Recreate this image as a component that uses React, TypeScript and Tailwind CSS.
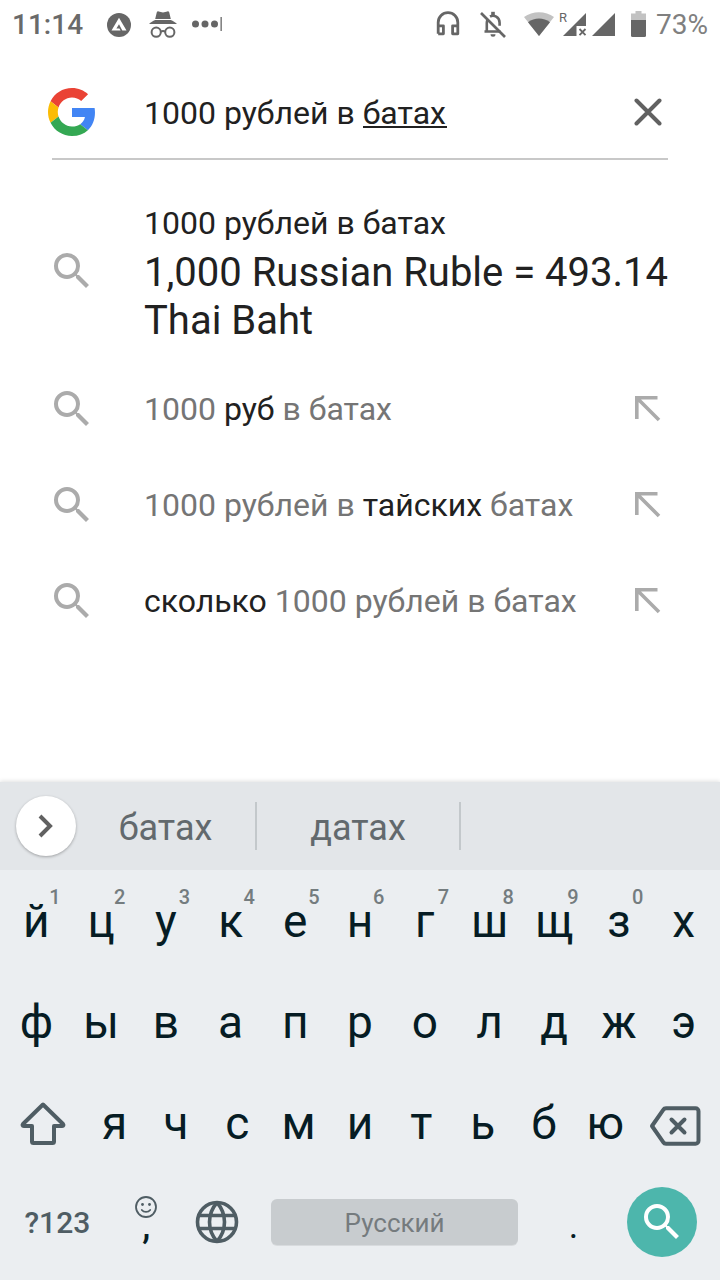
import { useState } from "react";
import type { ReactNode } from "react";

const ROW_ONE = [
  { letter: "й", digit: "1" },
  { letter: "ц", digit: "2" },
  { letter: "у", digit: "3" },
  { letter: "к", digit: "4" },
  { letter: "е", digit: "5" },
  { letter: "н", digit: "6" },
  { letter: "г", digit: "7" },
  { letter: "ш", digit: "8" },
  { letter: "щ", digit: "9" },
  { letter: "з", digit: "0" },
  { letter: "х" },
];
const ROW_TWO = ["ф", "ы", "в", "а", "п", "р", "о", "л", "д", "ж", "э"];
const ROW_THREE = ["я", "ч", "с", "м", "и", "т", "ь", "б", "ю"];

// strong marks the words that the query does not have yet
const SUGGESTIONS = [
  [{ text: "1000 " }, { text: "руб", strong: true }, { text: " в батах" }],
  [{ text: "1000 рублей в " }, { text: "тайских", strong: true }, { text: " батах" }],
  [{ text: "сколько", strong: true }, { text: " 1000 рублей в батах" }],
];

function SearchIcon({ className }: { className: string }) {
  return (
    <svg viewBox="0 0 24 24" fill="currentColor" className={className} aria-hidden="true">
      <path d="M15.5 14h-.79l-.28-.27A6.471 6.471 0 0 0 16 9.5 6.5 6.5 0 1 0 9.5 16c1.61 0 3.09-.59 4.23-1.57l.27.28v.79l5 4.99L20.49 19l-4.99-5zm-6 0C7.01 14 5 11.99 5 9.5S7.01 5 9.5 5 14 7.01 14 9.5 11.99 14 9.5 14z" />
    </svg>
  );
}

function GoogleLogo() {
  return (
    <svg viewBox="0 0 48 48" className="size-12 shrink-0" role="img" aria-label="Google">
      <path fill="#ea4335" d="M24 9.5c3.54 0 6.71 1.22 9.21 3.6l6.85-6.85C35.9 2.38 30.47 0 24 0 14.62 0 6.51 5.38 2.56 13.22l7.98 6.19C12.43 13.72 17.74 9.5 24 9.5z" />
      <path fill="#4285f4" d="M46.98 24.55c0-1.57-.15-3.09-.38-4.55H24v9.02h12.94c-.58 2.96-2.26 5.48-4.78 7.18l7.73 6c4.51-4.18 7.09-10.36 7.09-17.65z" />
      <path fill="#fbbc05" d="M10.53 28.59c-.48-1.45-.76-2.99-.76-4.59s.27-3.14.76-4.59l-7.98-6.19C.92 16.46 0 20.12 0 24c0 3.88.92 7.54 2.56 10.78l7.97-6.19z" />
      <path fill="#34a853" d="M24 48c6.48 0 11.93-2.13 15.89-5.81l-7.73-6c-2.15 1.45-4.92 2.3-8.16 2.3-6.26 0-11.57-4.22-13.47-9.91l-7.98 6.19C6.51 42.62 14.62 48 24 48z" />
    </svg>
  );
}

function StatusBar() {
  return (
    <header className="flex h-12 items-center justify-between px-3 text-[28px] text-[#666]">
      <div className="flex items-center pt-0.5">
        <span className="font-medium text-[#6a6a6a]">11:14</span>
        <svg viewBox="0 0 24 24" className="ml-6 size-6" aria-hidden="true">
          <circle cx="12" cy="12" r="12" fill="#666" />
          <path d="M12 4.800l7.500 12.700h-4.200L12 11.200l-2.600 4.300h3l1.200 2H4.500z" fill="#fff" />
        </svg>
        <svg viewBox="0 0 28 28" className="ml-[18px] size-7" fill="#666" aria-hidden="true">
          <path d="M7.800 1.300c.3-.8 1-1.200 1.800-.9l4.400 1.100 4.400-1.100c.8-.3 1.500.1 1.800.9L21.800 8H6.200z" />
          <path d="M6.200 9h15.600c2.300.9 4.400 2.200 6.200 4H0c1.800-1.800 3.900-3.100 6.200-4z" />
          <g fill="none" stroke="#666" strokeWidth="2">
            <circle cx="7.200" cy="21.200" r="4.600" />
            <circle cx="20.800" cy="21.200" r="4.600" />
            <path d="M11.800 20.600c1.400-.9 3-.9 4.400 0" />
          </g>
        </svg>
        <svg viewBox="0 0 31 16" className="ml-[15px] h-4 w-[31px]" fill="#666" aria-hidden="true">
          <circle cx="3.500" cy="7" r="3.500" />
          <circle cx="13" cy="7" r="3.500" />
          <circle cx="22.500" cy="7" r="3.500" />
          <path d="M28.500 0h1.300v14h-1.300z" />
        </svg>
      </div>

      <div className="flex items-center">
        <svg viewBox="0 0 24 26" className="-ml-0.5 h-[26px] w-6" fill="none" stroke="#666" strokeWidth="2.800" aria-hidden="true">
          <path d="M2.200 22.800V11.500a9.800 9.800 0 0 1 19.600 0v11.300h-5.200v-8h5.200M2.200 14.800h5.200v8H2.200" strokeLinejoin="round" />
        </svg>
        <svg viewBox="0 0 26 28" className="ml-5 h-7 w-[26px]" fill="none" stroke="#666" strokeWidth="2.600" aria-hidden="true">
          <path d="M1 3l24 24" />
          <path d="M4.500 21.500h16M6.800 21.500v-8.500c0-1.200.2-2.300.7-3.200M10 6.500c3.800-2 9.600.2 9.600 6.200v3" />
          <path d="M11.200 1.800h3.600V5h-3.600z" fill="#666" stroke="none" />
          <path d="M10.500 24.200h5a2.500 2.500 0 0 1-5 0z" fill="#666" stroke="none" />
        </svg>
        <svg viewBox="0 0 30 24" className="ml-[18px] h-6 w-[30px]" aria-hidden="true">
          <path d="M15 24L0 5C8.500-1.400 21.500-1.400 30 5z" fill="#c2c2c2" />
          <path d="M15 24L4 10.200c6.500-5 15.500-5 22 0z" fill="#666" />
        </svg>
        <svg viewBox="0 0 30 30" className="ml-[5px] size-[30px]" aria-hidden="true">
          <text x="0" y="13" fontSize="13" fill="#666" fontFamily="Roboto, sans-serif">R</text>
          <path d="M27 4v13h-9.500v10H4z" fill="#666" />
          <path d="M20.500 20l6 6.200M26.500 20l-6 6.200" stroke="#666" strokeWidth="1.800" />
        </svg>
        <svg viewBox="0 0 23 23" className="ml-[3px] size-[23px]" fill="#666" aria-hidden="true">
          <path d="M23 0v23H0z" />
        </svg>
        <svg viewBox="0 0 15 26" className="ml-4 h-[26px] w-[15px]" aria-hidden="true">
          <path d="M4.500 0h6v2.500H15V9H0V2.500h4.500z" fill="#c2c2c2" />
          <path d="M0 9h15v15.500a1.500 1.500 0 0 1-1.500 1.500h-12A1.500 1.500 0 0 1 0 24.500z" fill="#666" />
        </svg>
        <span className="ml-2.5 pt-0.5 text-[#808080]">73%</span>
      </div>
    </header>
  );
}

function SearchField() {
  const [query, setQuery] = useState("1000 рублей в батах");

  return (
    <form className="mx-[52px] flex h-28 items-center border-b-2 border-[#c8c8c8] pt-[18px]" onSubmit={(e) => e.preventDefault()}>
      <div className="-ml-1">
        <GoogleLogo />
      </div>
      <div className="relative ml-12 min-w-0 flex-1">
        <input
          type="text"
          aria-label="Поиск"
          value={query}
          onChange={(e) => setQuery(e.target.value)}
          className="block h-12 w-full bg-transparent pt-0.5 text-[32px] text-[#212121] outline-none"
        />
        {/* composing underline of the word being typed */}
        <span className="absolute bottom-2 left-[219px] h-0.5 w-[84px] bg-[#212121]" />
      </div>
      <button type="button" aria-label="Очистить" onClick={() => setQuery("")} className="-mr-1 flex size-12 items-center justify-center">
        <svg viewBox="0 0 28 28" className="size-7" fill="none" stroke="#616161" strokeWidth="4" strokeLinecap="round">
          <path d="M2.500 2.500l23 23M25.500 2.500l-23 23" />
        </svg>
      </button>
    </form>
  );
}

function Suggestions() {
  return (
    <ul className="pt-[21px] text-[32px] leading-[48px] text-[#757575]">
      <li>
        <button type="button" className="flex w-full items-center py-[18px] pl-12 pr-10 text-left text-[#212121]">
          <SearchIcon className="size-12 shrink-0 text-[#ababab]" />
          <span className="ml-12 min-w-0 flex-1">
            <span className="block">1000 рублей в батах</span>
            <span className="-mb-0.5 block pt-0.5 text-[40px]">1,000 Russian Ruble = 493.14 Thai Baht</span>
          </span>
        </button>
      </li>
      {SUGGESTIONS.map((parts, i) => (
        <li key={i} className="flex h-24 items-center pl-12 pr-12">
          <button type="button" className="flex min-w-0 flex-1 items-center text-left">
            <SearchIcon className="size-12 shrink-0 text-[#ababab]" />
            <span className="ml-12 whitespace-pre">
              {parts.map((part) => (
                <span key={part.text} className={part.strong ? "text-[#212121]" : ""}>
                  {part.text}
                </span>
              ))}
            </span>
          </button>
          <button type="button" aria-label="Подставить запрос" className="flex size-12 items-center justify-center">
            <svg viewBox="0 0 26 26" className="size-[26px]" fill="none" stroke="#ababab" strokeWidth="3.600">
              <path d="M22.500 1.800H1.800V23M2 2l22 22" />
            </svg>
          </button>
        </li>
      ))}
    </ul>
  );
}

function Key({ label, digit }: { label: string; digit?: string }) {
  return (
    <button type="button" className="relative flex min-w-0 flex-1 items-center justify-center pt-px">
      {label}
      {digit && (
        <span className="absolute right-2 top-[17px] text-xl leading-5 font-medium text-[#747c7f]">{digit}</span>
      )}
    </button>
  );
}

function Row({ children }: { children: ReactNode }) {
  return <div className="flex h-[101px] px-1">{children}</div>;
}

function Keyboard() {
  return (
    <section aria-label="Клавиатура" className="mt-auto bg-[#ebeef1] pb-1.5 text-[46px] leading-none text-[#061c24] shadow-[0_-1px_4px_rgba(0,0,0,0.12)]">
      <div className="flex h-[88px] items-center bg-[#e3e6e9] pl-4 text-4xl text-[#62696d]">
        <button type="button" aria-label="Развернуть" className="flex size-[60px] items-center justify-center rounded-full bg-white shadow-[0_1px_3px_rgba(0,0,0,0.3)]">
          <svg viewBox="0 0 16 24" className="h-6 w-4" fill="none" stroke="#616161" strokeWidth="4">
            <path d="M2 2l10 10L2 22" />
          </svg>
        </button>
        <button type="button" className="h-12 w-[181px] border-r-2 border-[#c3c8cb] pt-1">батах</button>
        <button type="button" className="h-12 w-[204px] border-r-2 border-[#c3c8cb] pt-1">датах</button>
      </div>

      <Row>
        {ROW_ONE.map((key) => (
          <Key key={key.letter} label={key.letter} digit={key.digit} />
        ))}
      </Row>
      <Row>
        {ROW_TWO.map((letter) => (
          <Key key={letter} label={letter} />
        ))}
      </Row>
      <Row>
        <button type="button" aria-label="Shift" className="flex w-20 items-center justify-center pr-0.5">
          <svg viewBox="0 0 46 44" className="h-11 w-[46px]" fill="none" stroke="#4f5d64" strokeWidth="4" strokeLinejoin="round">
            <path d="M23 3.500L3 23c-.8 1-.5 2 .8 2H12v15.500c0 1 .6 1.500 1.500 1.500h19c.9 0 1.500-.5 1.500-1.500V25h8.200c1.300 0 1.600-1 .8-2z" />
          </svg>
        </button>
        {ROW_THREE.map((letter) => (
          <Key key={letter} label={letter} />
        ))}
        <button type="button" aria-label="Удалить" className="flex w-20 items-center justify-center pt-1.5 pr-0.5">
          <svg viewBox="0 0 52 40" className="h-10 w-[52px]" fill="none" stroke="#4f5d64" strokeWidth="4" strokeLinejoin="round">
            <path d="M17 2.200h29.500a3 3 0 0 1 3 3v29.600a3 3 0 0 1-3 3H17c-1.200 0-2-.4-2.600-1.400L3 20 14.400 3.600C15 2.600 15.800 2.200 17 2.200z" />
            <path d="M22.500 13.500l13 13M35.500 13.500l-13 13" strokeLinecap="round" />
          </svg>
        </button>
      </Row>
      <Row>
        <button type="button" className="w-[15%] pb-0.5 text-[30px] font-medium text-[#4f5d64]">?123</button>
        <button type="button" aria-label="Запятая и эмодзи" className="flex w-[10%] flex-col items-center pt-[23px] text-4xl leading-4 font-medium">
          <svg viewBox="0 0 22 22" className="size-[22px]" fill="none" stroke="#4f5d64" strokeWidth="1.800" strokeLinecap="round">
            <circle cx="11" cy="11" r="10" />
            <path d="M6.800 14c2 2.600 6.400 2.600 8.400 0" />
            <circle cx="7.500" cy="8.500" r="1.400" fill="#4f5d64" stroke="none" />
            <circle cx="14.500" cy="8.500" r="1.400" fill="#4f5d64" stroke="none" />
          </svg>
          ,
        </button>
        <button type="button" aria-label="Сменить язык" className="flex w-[10%] items-center justify-center pb-1 pr-0.5">
          <svg viewBox="0 0 44 44" className="size-11" fill="none" stroke="#4f5d64" strokeWidth="3.600">
            <circle cx="22" cy="22" r="19.500" />
            <path d="M22 2.500c-10 11.500-10 27.500 0 39M22 2.500c10 11.500 10 27.500 0 39M4 15.500h36M4 28.500h36" />
          </svg>
        </button>
        <div className="flex w-[40%] items-center pl-[18px] pr-5 pb-1">
          <button type="button" className="h-[46px] w-full rounded-md bg-[#c8cccf] pt-0.5 text-[26px] text-[#757b7e] shadow-[0_1px_0_rgba(0,0,0,0.08)]">
            Русский
          </button>
        </div>
        <button type="button" className="w-[10%] pt-1 text-4xl">.</button>
        <div className="flex w-[15%] items-center justify-center pb-1 pr-0.5">
          <button type="button" aria-label="Найти" className="flex size-[70px] items-center justify-center rounded-full bg-[#4db6ac] text-white">
            <SearchIcon className="size-12" />
          </button>
        </div>
      </Row>
    </section>
  );
}

export default function App() {
  return (
    <div className="flex min-h-screen flex-col bg-white font-['Roboto',sans-serif]">
      <StatusBar />
      <main>
        <SearchField />
        <Suggestions />
      </main>
      <Keyboard />
    </div>
  );
}
